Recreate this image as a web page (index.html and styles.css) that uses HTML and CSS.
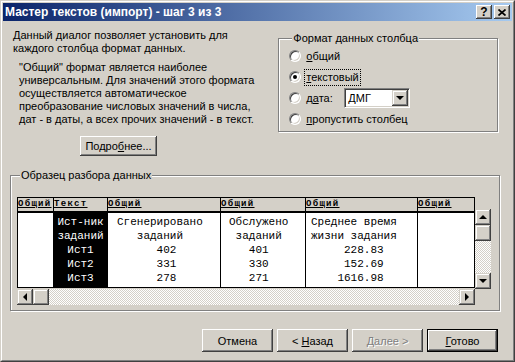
FILE: index.html
```html
<!DOCTYPE html>
<html lang="ru">
<head>
    <meta charset="UTF-8">
    <title>Мастер текстов (импорт) - шаг 3 из 3</title>
    <link rel="stylesheet" href="styles.css">
</head>
<body>
    <div class="window">
        <div class="frame">
            <div class="titlebar">
                <span class="title">Мастер текстов (импорт) - шаг 3 из 3</span>
                <div class="caption-buttons">
                    <button class="cap-btn help">?</button>
                    <button class="cap-btn close">
                        <svg width="8" height="7" viewBox="0 0 8 7">
                            <path d="M0.5 0.5 L7.5 6.5 M7.5 0.5 L0.5 6.5" stroke="#000" stroke-width="1.7" fill="none"/>
                        </svg>
                    </button>
                </div>
            </div>

            <div class="client">
                <div class="top">
                    <div class="intro">
                        <p class="lead">Данный диалог позволяет установить для<br>каждого столбца формат данных.</p>
                        <p class="note">"Общий" формат является наиболее<br>универсальным. Для значений этого формата<br>осуществляется автоматическое<br>преобразование числовых значений в числа,<br>дат - в даты, а всех прочих значений - в текст.</p>
                        <button class="btn more">Подро<u>б</u>нее...</button>
                    </div>

                    <div class="group format">
                        <div class="group-title">Формат данных столбца</div>
                        <div class="radio-row">
                            <span class="radio"></span>
                            <span class="radio-label"><u>о</u>бщий</span>
                        </div>
                        <div class="radio-row">
                            <span class="radio checked"></span>
                            <span class="radio-label focused"><u>т</u>екстовый</span>
                        </div>
                        <div class="radio-row">
                            <span class="radio"></span>
                            <span class="radio-label date-label">д<u>а</u>та:</span>
                            <div class="combo">
                                <span class="combo-value">ДМГ</span>
                                <span class="combo-btn"><span class="arrow down"></span></span>
                            </div>
                        </div>
                        <div class="radio-row">
                            <span class="radio"></span>
                            <span class="radio-label"><u>п</u>ропустить столбец</span>
                        </div>
                    </div>
                </div>

                <div class="group sample">
                    <div class="group-title">Образец разбора данных</div>
                    <div class="preview">
                        <div class="sheet-area">
                            <div class="sheet">
                                <div class="col c1">
                                    <div class="hd">Общий</div>
                                    <div class="cells"></div>
                                </div>
                                <div class="col c2">
                                    <div class="hd">Текст</div>
                                    <div class="cells selected">
                                        <div>Ист-ник</div>
                                        <div>заданий</div>
                                        <div>Ист1</div>
                                        <div>Ист2</div>
                                        <div>Ист3</div>
                                    </div>
                                </div>
                                <div class="col c3">
                                    <div class="hd">Общий</div>
                                    <div class="cells">
                                        <div>Сгенерировано</div>
                                        <div>   заданий</div>
                                        <div>      402</div>
                                        <div>      331</div>
                                        <div>      278</div>
                                    </div>
                                </div>
                                <div class="col c4">
                                    <div class="hd">Общий</div>
                                    <div class="cells">
                                        <div>Обслужено</div>
                                        <div> заданий</div>
                                        <div>   401</div>
                                        <div>   330</div>
                                        <div>   271</div>
                                    </div>
                                </div>
                                <div class="col c5">
                                    <div class="hd">Общий</div>
                                    <div class="cells">
                                        <div>Среднее время</div>
                                        <div>жизни задания</div>
                                        <div>     228.83</div>
                                        <div>     152.69</div>
                                        <div>    1616.98</div>
                                    </div>
                                </div>
                                <div class="col c6">
                                    <div class="hd">Общий</div>
                                    <div class="cells"></div>
                                </div>
                            </div>
                            <div class="hscroll">
                                <span class="sb-btn"><span class="arrow left"></span></span>
                                <span class="sb-btn thumb"></span>
                                <span class="track"></span>
                                <span class="sb-btn"><span class="arrow right"></span></span>
                            </div>
                        </div>
                        <div class="vscroll">
                            <span class="sb-btn"><span class="arrow up"></span></span>
                            <span class="sb-btn thumb"></span>
                            <span class="track"></span>
                            <span class="sb-btn"><span class="arrow down"></span></span>
                        </div>
                    </div>
                </div>

                <div class="actions">
                    <button class="btn">Отмена</button>
                    <button class="btn">&lt; <u>Н</u>азад</button>
                    <button class="btn disabled">Далее &gt;</button>
                    <button class="btn default"><u>Г</u>отово</button>
                </div>
            </div>
        </div>
    </div>
</body>
</html>
```

FILE: styles.css
```css
/* Общие стили */
* {
    margin: 0;
    padding: 0;
    box-sizing: border-box;
}

body {
    font-family: 'Liberation Sans', Arial, sans-serif;
    font-size: 11px;
    line-height: 13px;
    color: #000;
    background-color: #d4d0c8;
    overflow: hidden;
}

u {
    text-decoration: underline;
    text-underline-offset: 1px;
}

/* Рамка окна */
.window {
    width: 515px;
    height: 362px;
    border: 1px solid;
    border-color: #d4d0c8 #404040 #404040 #d4d0c8;
}

.frame {
    height: 100%;
    border: 1px solid;
    border-color: #fff #808080 #808080 #fff;
    padding: 1px;
    display: flex;
    flex-direction: column;
}

.titlebar {
    height: 18px;
    flex-shrink: 0;
    background: linear-gradient(to right, #0a246a, #a6caf0);
    display: flex;
    align-items: center;
    justify-content: space-between;
    padding: 0 2px 0 2px;
}

.title {
    color: #fff;
    font-weight: bold;
    font-size: 12px;
}

.caption-buttons {
    display: flex;
    gap: 2px;
}

.cap-btn {
    width: 16px;
    height: 14px;
    border: none;
    background-color: #d4d0c8;
    box-shadow: inset -1px -1px #404040, inset 1px 1px #fff, inset -2px -2px #808080, inset 2px 2px #d4d0c8;
    display: flex;
    align-items: center;
    justify-content: center;
    font-family: 'Liberation Sans', Arial, sans-serif;
    font-weight: bold;
    font-size: 12px;
    line-height: 12px;
    color: #000;
}

/* Рабочая область */
.client {
    flex: 1;
    padding: 8px 14px 0 7px;
}

.top {
    display: flex;
    align-items: flex-start;
    height: 128px;
}

.intro {
    width: 267px;
    margin-left: 3px;
}

.note {
    margin-top: 6px;
    padding-left: 6px;
}

/* Кнопки */
.btn {
    font-family: 'Liberation Sans', Arial, sans-serif;
    font-size: 11px;
    color: #000;
    background-color: #d4d0c8;
    border: none;
    width: 71px;
    height: 23px;
    box-shadow: inset -1px -1px #404040, inset 1px 1px #fff, inset -2px -2px #808080, inset 2px 2px #d4d0c8;
}

.btn.more {
    width: 77px;
    height: 20px;
    margin: 10px 0 0 67px;
}

.btn.disabled {
    color: #808080;
    text-shadow: 1px 1px 0 #fff;
}

.btn.default {
    border: 1px solid #000;
}

/* Рамки групп */
.group {
    border: 1px solid #808080;
    box-shadow: 1px 1px 0 #fff, inset 1px 1px 0 #fff;
}

.group-title {
    width: fit-content;
    margin: -7px 0 0 3px;
    padding: 0 1px;
    background-color: #d4d0c8;
}

.format {
    width: 221px;
    height: 94px;
    margin: 9px 0 0 0;
    padding-left: 10px;
    display: flex;
    flex-direction: column;
    gap: 1px;
}

.radio-row {
    height: 20px;
    display: flex;
    align-items: center;
}

.radio {
    width: 12px;
    height: 12px;
    border-radius: 50%;
    background-color: #fff;
    border: 1px solid;
    border-color: #808080 #fff #fff #808080;
    box-shadow: inset 1px 1px 0 #404040, inset -1px -1px 0 #d4d0c8;
    display: flex;
    align-items: center;
    justify-content: center;
    margin-right: 4px;
}

.radio.checked::after {
    content: "";
    width: 4px;
    height: 4px;
    border-radius: 50%;
    background-color: #000;
}

.radio-label {
    padding: 1px 1px;
}

.radio-label.focused {
    outline: 1px dotted #000;
    outline-offset: 0;
}

.date-label {
    width: 39px;
}

.combo {
    width: 66px;
    height: 20px;
    background-color: #fff;
    border: 1px solid;
    border-color: #808080 #fff #fff #808080;
    box-shadow: inset 1px 1px 0 #404040, inset -1px -1px 0 #d4d0c8;
    display: flex;
    align-items: center;
    justify-content: space-between;
    padding: 1px;
}

.combo-value {
    padding-left: 2px;
}

.combo-btn {
    width: 16px;
    height: 16px;
    background-color: #d4d0c8;
    box-shadow: inset -1px -1px #404040, inset 1px 1px #d4d0c8, inset -2px -2px #808080, inset 2px 2px #fff;
    display: flex;
    align-items: center;
    justify-content: center;
}

/* Образец данных */
.sample {
    width: 490px;
    height: 136px;
    margin-top: 18px;
    padding-left: 6px;
}

.preview {
    display: flex;
    margin-top: 15px;
}

.sheet-area {
    width: 458px;
}

.sheet {
    height: 91px;
    border: 1px solid #000;
    display: flex;
    background-color: #fff;
    font-family: 'Liberation Mono', 'Courier New', monospace;
    overflow: hidden;
}

.col {
    display: flex;
    flex-direction: column;
    flex-shrink: 0;
    border-right: 1px solid #000;
    overflow: hidden;
}

.c1 { width: 36px; }
.c2 { width: 54px; }
.c3 { width: 113px; }
.c4 { width: 85px; }
.c5 { width: 112px; }
.c6 { width: 56px; border-right: none; }

.hd {
    height: 15px;
    flex-shrink: 0;
    background-color: #d4d0c8;
    border-bottom: 2px solid #000;
    font-size: 9px;
    font-weight: bold;
    letter-spacing: 1.3px;
    line-height: 11px;
    padding-top: 1px;
    text-decoration: underline;
    overflow: hidden;
    white-space: nowrap;
}

.cells {
    flex: 1;
    padding-top: 2px;
    font-size: 11px;
    line-height: 14px;
}

.cells div {
    white-space: pre;
}

.c2 .cells {
    text-align: center;
}

.cells.selected {
    background-color: #000;
    color: #fff;
}

.c3 .cells { padding-left: 9px; }
.c4 .cells { padding-left: 8px; }
.c5 .cells { padding-left: 5px; }

/* Полосы прокрутки */
.hscroll, .vscroll {
    display: flex;
}

.hscroll {
    height: 17px;
    padding-top: 1px;
}

.vscroll {
    flex-direction: column;
    width: 16px;
    height: 80px;
    margin-top: 12px;
}

.sb-btn {
    width: 16px;
    height: 16px;
    flex-shrink: 0;
    background-color: #d4d0c8;
    box-shadow: inset -1px -1px #404040, inset 1px 1px #d4d0c8, inset -2px -2px #808080, inset 2px 2px #fff;
    display: flex;
    align-items: center;
    justify-content: center;
}

.track {
    flex: 1;
    background: repeating-conic-gradient(#fff 0 25%, #d4d0c8 0 50%) 0 0 / 2px 2px;
}

.arrow {
    width: 0;
    height: 0;
    border: 4px solid transparent;
}

.arrow.up {
    border-bottom-color: #000;
    border-top-width: 0;
    margin-top: -1px;
}

.arrow.down {
    border-top-color: #000;
    border-bottom-width: 0;
}

.arrow.left {
    border-right-color: #000;
    border-left-width: 0;
}

.arrow.right {
    border-left-color: #000;
    border-right-width: 0;
}

/* Нижние кнопки */
.actions {
    display: flex;
    justify-content: flex-end;
    gap: 4px;
    margin-top: 18px;
}
```
